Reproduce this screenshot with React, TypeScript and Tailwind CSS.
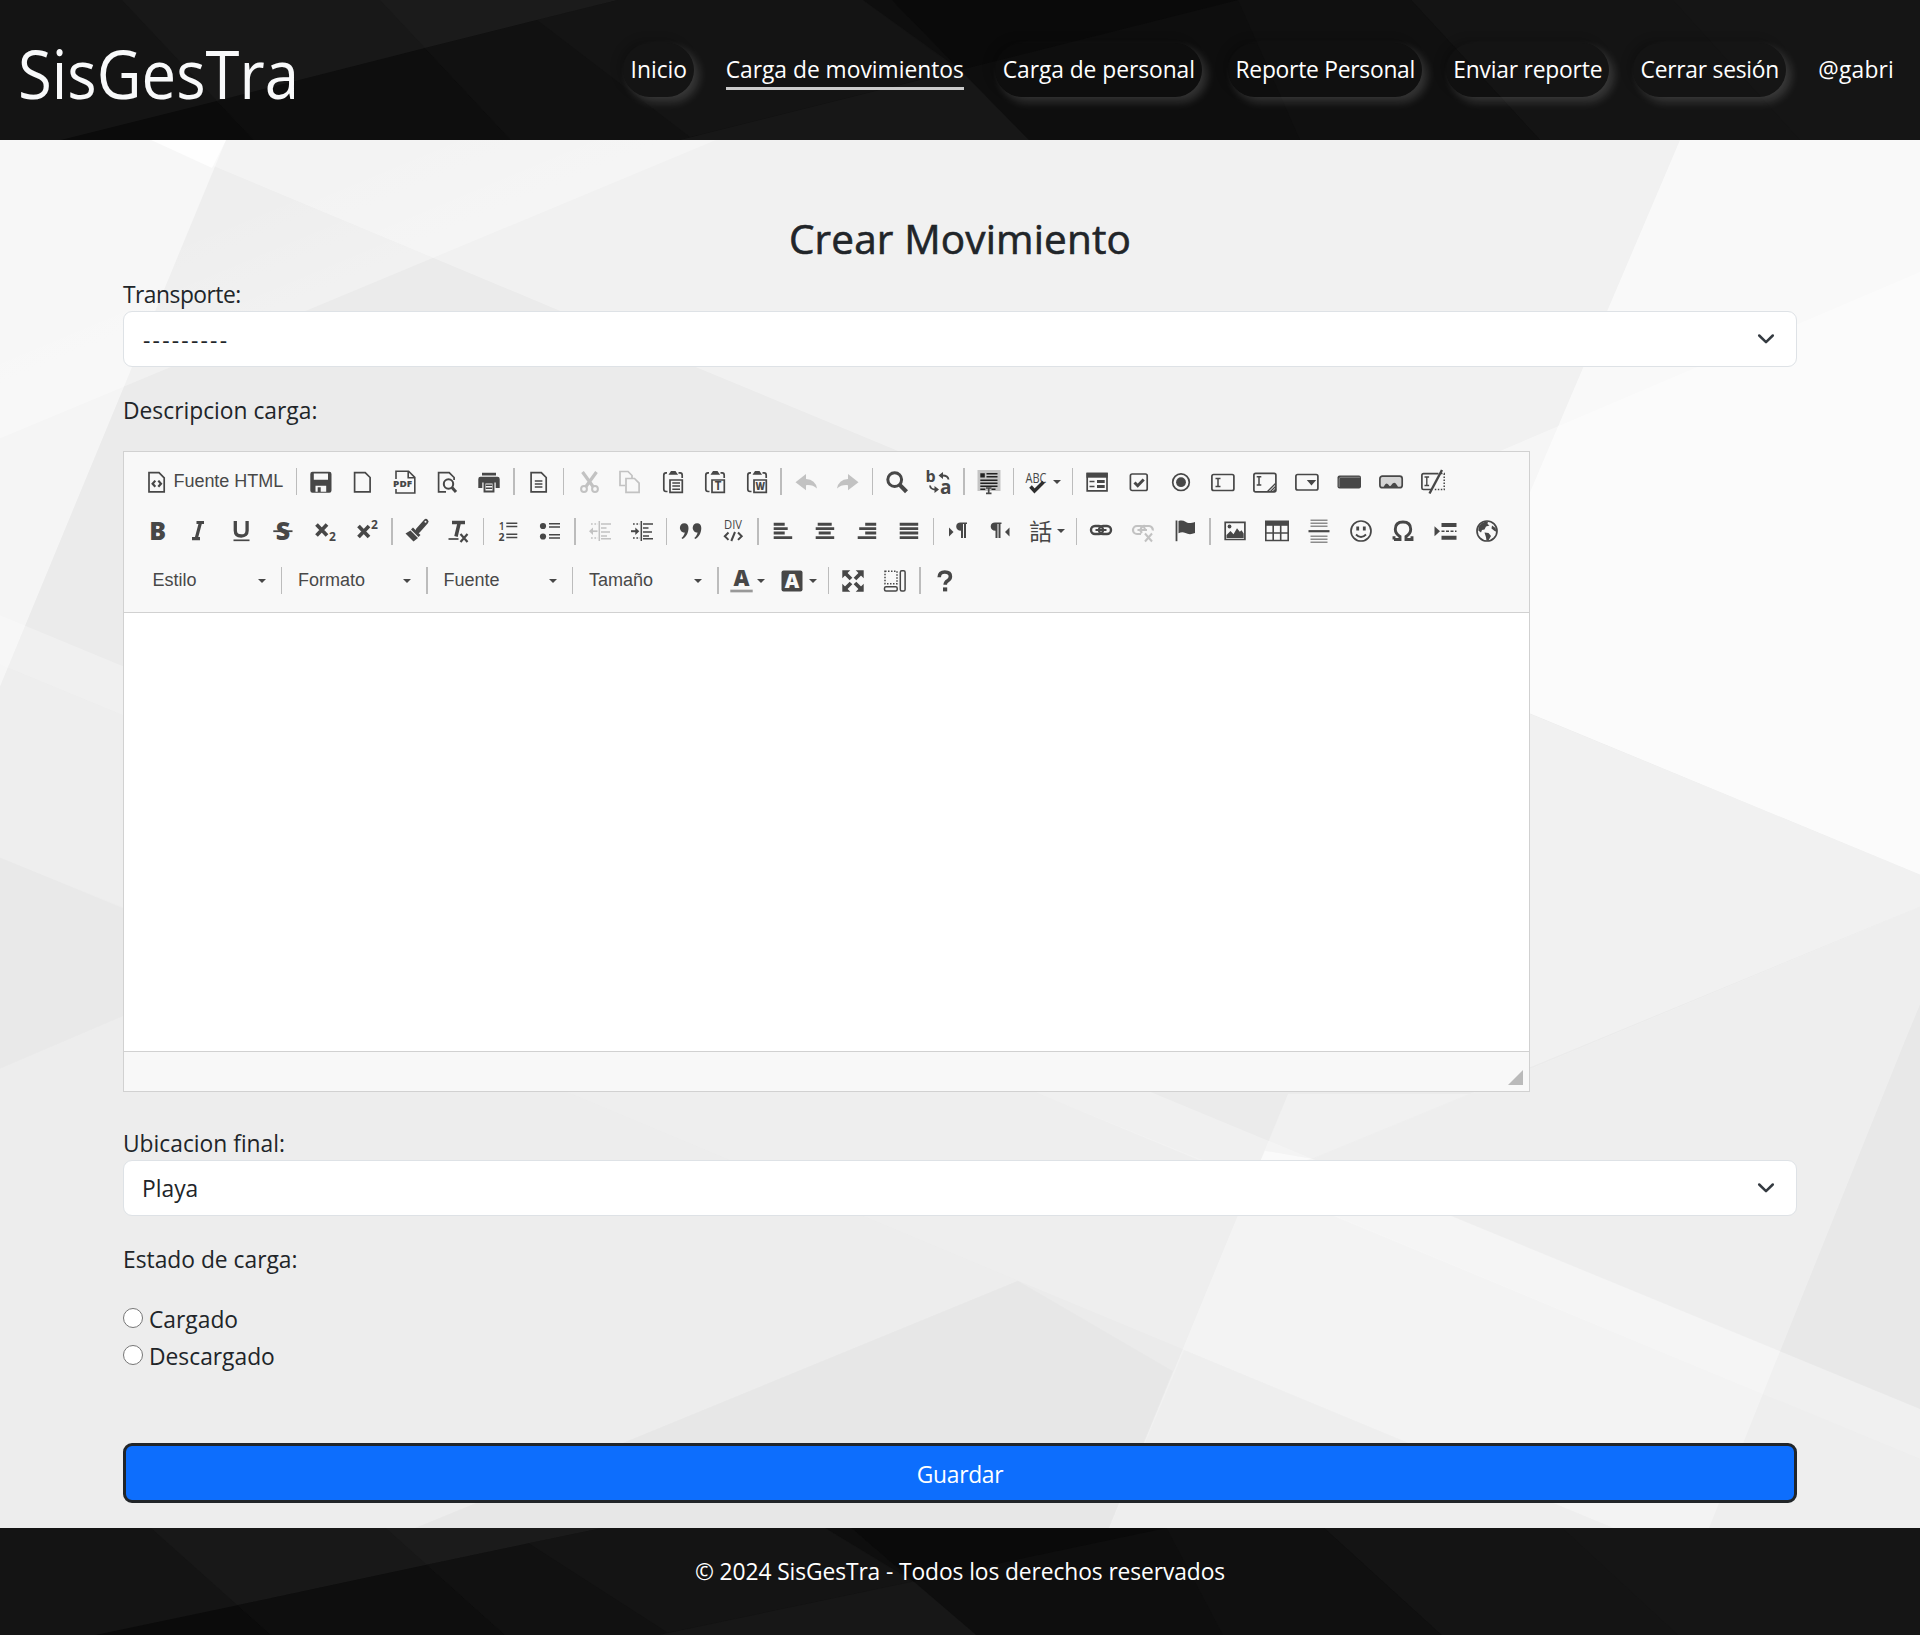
import React from 'react';

const INK = '#474747';

type IconProps = { children: React.ReactNode; dim?: boolean };

function Icon({ children, dim }: IconProps) {
  return (
    <svg
      viewBox="0 0 24 24"
      className={dim ? 'h-6 w-6 shrink-0 overflow-visible opacity-30' : 'h-6 w-6 shrink-0 overflow-visible'}
      fill="none"
      stroke={INK}
      strokeWidth="1.7"
    >
      {children}
    </svg>
  );
}

type GlyphProps = {
  x: number;
  y: number;
  size: number;
  children: string;
  family?: string;
  weight?: number;
  fill?: string;
  length?: number;
};

function Glyph({ x, y, size, children, family = 'Open Sans', weight = 700, fill = INK, length }: GlyphProps) {
  return (
    <text
      x={x}
      y={y}
      fontSize={size}
      fontFamily={`"${family}", sans-serif`}
      fontWeight={weight}
      textAnchor="middle"
      fill={fill}
      stroke="none"
      textLength={length}
      lengthAdjust="spacingAndGlyphs"
    >
      {children}
    </text>
  );
}

const solid = { fill: INK, stroke: 'none' };

const clipboard = (
  <>
    <path d="M7.500 21.500H6q-2.200 0-2.200-2.200V5.200q0-2.400 2.200-2.400h1M18.500 2.800h1.700q2 0 2 2.400V8" />
    <path {...solid} d="M8.500 4.700 10 2.600 11 1h4.500l1 1.600 1.600 2.100z" />
    <path d="M10 10h12.300v12.300H10z" />
  </>
);

const icons: Record<string, React.ReactNode> = {
  source: (
    <>
      <path d="M4 2.600h10l5.200 5.200v14.100H4z" />
      <path d="M10.300 10.600 7.600 13.700l2.700 3.100M13.300 10.600l2.700 3.100-2.700 3.100" strokeWidth="2.200" />
    </>
  ),
  save: (
    <path
      {...solid}
      fillRule="evenodd"
      d="M3.500 1.700h16.800a2.200 2.200 0 0 1 2.200 2.200v16.600a2.200 2.200 0 0 1-2.200 2.200H3.500a2.200 2.200 0 0 1-2.200-2.200V3.900a2.200 2.200 0 0 1 2.200-2.200zM4.800 3.500v6.200h14.200V3.500zM6.500 15.800v5.900h2.200v-4.500h3v4.500h5.500v-5.900z"
    />
  ),
  newpage: <path d="M3.600 2.600h10.600l4.900 4.900v14.400H3.600z" />,
  pdf: (
    <>
      <path d="M3 9V1.200h12.600l6.200 6.200V23H3v-4M15.200 1.200v6.600h6.600" strokeWidth="1.600" />
      <Glyph x={9.600} y={16.800} size={9} weight={800} length={19}>PDF</Glyph>
    </>
  ),
  preview: (
    <>
      <path d="M11 21.900H3.600V2.600h10.600l4.900 4.900v2.500" />
      <circle cx="13.500" cy="14" r="4.700" strokeWidth="2" />
      <path d="m17 17.500 4 4.500" strokeWidth="3" />
    </>
  ),
  print: (
    <>
      <path {...solid} d="M5 2.800h14v2.800H5zM3.500 6.800h17a2.200 2.200 0 0 1 2.200 2.200v9h-4v-5.500H5.300V18h-4V9a2.200 2.200 0 0 1 2.200-2.200z" />
      <path d="M7.500 12.500h9v9h-9z" strokeWidth="1.900" />
      <path d="M8.800 15.300h6.400M8.800 18.300h6.400" strokeWidth="1.600" />
    </>
  ),
  templates: (
    <>
      <path d="M4.100 2.600h10.200l4.900 4.900v14.400H4.100z" />
      <path d="M7.800 11h7.600M7.800 14h7.600M7.800 17h7.600" strokeWidth="1.500" />
    </>
  ),
  cut: (
    <>
      <path d="M6.500 2 17 16.500M20.500 2 10 16.500" strokeWidth="3.200" />
      <circle cx="8" cy="19" r="2.900" strokeWidth="2" />
      <circle cx="19" cy="19" r="2.900" strokeWidth="2" />
    </>
  ),
  copy: (
    <>
      <path d="M7 15.500H2V1.500h8l4 4v3" />
      <path d="M8 8.500h8.500l4.600 4.600v9.300H8z" />
    </>
  ),
  paste: (
    <>
      {clipboard}
      <path d="M12.300 13h7.700M12.300 16.100h7.700M12.300 19.200h7.700" strokeWidth="1.500" />
    </>
  ),
  pasteText: (
    <>
      {clipboard}
      <Glyph x={16.150} y={20.300} size={11.500} weight={700}>T</Glyph>
    </>
  ),
  pasteWord: (
    <>
      {clipboard}
      <Glyph x={16.150} y={20.300} size={11} weight={800} length={9.500}>W</Glyph>
    </>
  ),
  undo: <path {...solid} d="M1.500 12.200 12 4v5q9.500.700 11 9.500-4.500-4-11-3.300v5z" />,
  redo: <path {...solid} d="M22.500 12.200 12 4v5q-9.500.700-11 9.500 4.500-4 11-3.300v5z" />,
  find: (
    <>
      <circle cx="9.700" cy="9.600" r="6.900" strokeWidth="3" />
      <path d="m14.500 14.600 7 7.200" strokeWidth="4.200" />
    </>
  ),
  replace: (
    <>
      <Glyph x={3.600} y={12.300} size={16} weight={700}>b</Glyph>
      <Glyph x={18.800} y={24} size={19} weight={700}>a</Glyph>
      <path d="M21.500 9.500q-.500-4-6-4M3 15.500q.500 4 5.500 4" strokeWidth="1.900" />
      <path {...solid} d="m11.500 5.500 4.500-3.500v7zM12 19.500l-4.500-3.500v7z" />
    </>
  ),
  selectall: (
    <>
      <path d="M.5 0h23v21H.5z" fill="#c4c4c4" stroke="none" />
      <path fill="#222" stroke="none" d="M3.300 3.200h4.500v4.200H3.300zM9.500 3h11v1.600h-11zM9.500 6h11v1.600h-11zM3.300 9.500h17.200v1.600H3.300zM3.300 12.500h17.200v1.600H3.300zM3.300 15.500h17.200v1.600H3.300zM3.300 18.500h5V20h-5zM14.500 18.500h4V20h-4z" />
      <path d="M9 18h5.500M9 23.300h5.500M11.700 18v5.500" strokeWidth="1.700" />
    </>
  ),
  spell: (
    <>
      <Glyph x={11} y={13.300} size={14.500} weight={500} length={21}>ABC</Glyph>
      <path d="m5.500 16.500 4 4.500 9-9" strokeWidth="3.500" stroke="#2e2e2e" />
    </>
  ),
  form: (
    <>
      <path d="M2.200 3.500h19.800v17.300H2.200z" />
      <path {...solid} d="M1.500 2.700h21.200v5H1.500z" />
      <path d="M4.500 11.500h5M4.500 16.500h5" strokeWidth="1.600" />
      <path d="M12 11.500h7.700M12 16.500h7.700" strokeWidth="2.800" />
    </>
  ),
  checkbox: (
    <>
      <rect x="3.400" y="4" width="16.800" height="16.500" rx="1.800" />
      <path d="m7.500 12.500 3.200 3.200 6-6.200" strokeWidth="3" />
    </>
  ),
  radio: (
    <>
      <circle cx="12" cy="12.200" r="8.300" />
      <circle cx="12" cy="12.200" r="4.900" {...solid} />
    </>
  ),
  textfield: (
    <>
      <rect x=".9" y="4.500" width="22" height="16" rx="1.800" />
      <path d="M4.500 8.500h5M4.500 16.500h5M7 8.500v8" strokeWidth="1.500" />
    </>
  ),
  textarea: (
    <>
      <rect x=".9" y="3.300" width="22" height="18.500" rx="1.800" />
      <path d="M3.700 6.800h4.600M3.700 15h4.600M6 6.800V15" strokeWidth="1.500" />
      <path d="m14.500 21.500 8-8M17.500 21.500l5-5M20.300 21.500l2.500-2.500" strokeWidth="1.300" />
    </>
  ),
  select: (
    <>
      <rect x=".9" y="4.500" width="22" height="15.500" rx="1.800" />
      <path {...solid} d="M11.800 10h9.400l-4.700 5.600z" />
    </>
  ),
  button: (
    <>
      <rect x=".5" y="5.500" width="23.500" height="13" rx="2" {...solid} />
      <path d="M2.200 17V9q0-1.700 1.700-1.700h19" stroke="#858585" strokeWidth="1" />
    </>
  ),
  imagebutton: (
    <>
      <rect x=".9" y="6.200" width="22.300" height="11.500" rx="2.500" fill="#d4d4d4" />
      <path {...solid} d="M4 18c1-1.500 2-4.500 3.700-4.500 1.300 0 2.500 2.700 3.300 2.700s2.500-3.500 4.300-3.500 3.200 3.500 4.500 5.300z" />
    </>
  ),
  hidden: (
    <>
      <path d="M10 19.500H2.500q-1.600 0-1.600-1.600V5.200q0-1.600 1.600-1.600h15" />
      <path d="M3.500 7h4.600M3.500 15.500h4.600M5.800 7v8.500" strokeWidth="1.400" />
      <path d="M21 0 8.500 23.500" strokeWidth="2.400" />
      <path d="M20 3.600h3.200v15.900H13" strokeDasharray="1.500 1.500" strokeWidth="1.500" />
    </>
  ),
  bold: <Glyph x={12.600} y={20.500} size={25} weight={800}>B</Glyph>,
  italic: <path d="M9.500 3.500h7.500M5 19.700h8M13.500 3.500 9.200 19.700" strokeWidth="3.200" />,
  underline: (
    <>
      <path d="M6.300 2v9.500q0 5.500 5.900 5.500t5.900-5.500V2" strokeWidth="3.300" />
      <path d="M4.500 21.300h16" strokeWidth="1.700" />
    </>
  ),
  strike: (
    <>
      <Glyph x={12} y={20.500} size={25} weight={800}>S</Glyph>
      <path d="M2.300 12.200h19.200" strokeWidth="1.800" />
    </>
  ),
  sub: (
    <>
      <path d="m3.500 5.500 10.500 11M14 5.500 3.500 16.500" strokeWidth="3.700" />
      <Glyph x={19.500} y={22.300} size={12} weight={700}>2</Glyph>
    </>
  ),
  sup: (
    <>
      <path d="m3.500 7 10.500 11M14 7 3.500 18" strokeWidth="3.700" />
      <Glyph x={19.500} y={10.300} size={12} weight={700}>2</Glyph>
    </>
  ),
  brush: (
    <>
      <path {...solid} d="M8 8.500 15.500 16l-2 2L6 10.500zM5.500 11.500 13 19l-4.500 3.500L.5 14.500z" />
      <path d="m13 11.500 8-9" strokeWidth="5" strokeLinecap="round" />
      <circle cx="20.500" cy="2.700" r="1" fill="#f8f8f8" stroke="none" />
    </>
  ),
  removeFormat: (
    <>
      <path d="M5 3.500h13M12.300 3.500 9 17.500" strokeWidth="3.500" />
      <path d="M1.500 20h10" strokeWidth="1.700" />
      <path d="m13.500 15 7 8M20.500 15l-7 8" strokeWidth="2.200" />
    </>
  ),
  numbered: (
    <>
      <Glyph x={5.800} y={10.500} size={10.500} weight={600}>1</Glyph>
      <Glyph x={5.500} y={22} size={10.500} weight={700}>2</Glyph>
      <path d="M10.300 4.200h11M10.300 7.500h11M10.300 15.200h11M10.300 18.500h11" strokeWidth="1.600" />
    </>
  ),
  bulleted: (
    <>
      <circle cx="5" cy="7" r="3.100" {...solid} />
      <circle cx="5" cy="17.500" r="3.100" {...solid} />
      <path d="M11 4.700h11M11 8h11M11 15.700h11M11 19h11" strokeWidth="1.600" />
    </>
  ),
  outdent: (
    <>
      <path d="M11.300 2v20M13 5h10M13 9h5.500M13 13h9M13 17h6M13 19.800h10" strokeWidth="1.500" />
      <path d="M3 5h7M3 19h7" strokeDasharray="1.700 1.700" strokeWidth="1.500" />
      <path d="M3 12.200h6.500" strokeWidth="1.700" />
      <path {...solid} d="m1 12.200 4-3.700v7.400z" />
    </>
  ),
  indent: (
    <>
      <path d="M11.300 2v20M13 5h10M13 9h5.500M13 13h9M13 17h6M13 19.800h10" strokeWidth="1.500" />
      <path d="M3 5h7M3 19h7" strokeDasharray="1.700 1.700" strokeWidth="1.500" />
      <path d="M1 12.200h5" strokeWidth="2" />
      <path {...solid} d="m9.300 12.200-4-3.700v7.400z" />
    </>
  ),
  quote: (
    <path
      {...solid}
      d="M5.300 4.200c2.600 0 4.200 1.900 4.200 4.900 0 5-2.500 9-6 11l-1-1.200c2-1.500 3-3.500 3.200-5.400C3.200 14 .9 11.500.9 8.800c0-2.700 1.800-4.600 4.400-4.600zM18.100 4.200c2.600 0 4.200 1.900 4.200 4.900 0 5-2.500 9-6 11l-1-1.200c2-1.500 3-3.500 3.200-5.400-2.500.5-4.800-2-4.800-4.700 0-2.700 1.800-4.600 4.400-4.600z"
    />
  ),
  div: (
    <>
      <Glyph x={12} y={10.300} size={13.500} weight={500} length={18}>DIV</Glyph>
      <path d="M7.500 13.500 3.800 17.200l3.700 3.700M17 13.500l3.700 3.700-3.700 3.700M14 13l-3.700 9" strokeWidth="2" />
    </>
  ),
  alignLeft: <path d="M2.700 5.200h11M2.700 9.600h14M2.700 14h11M2.700 18.600h18.500" strokeWidth="2.900" />,
  alignCenter: <path d="M4.700 5.200h14M2.700 9.600h18.500M5.700 14h12M2.700 18.600h18.500" strokeWidth="2.900" />,
  alignRight: <path d="M10.200 5.200h11M4.200 9.600h17M10.200 14h11M2.700 18.600h18.500" strokeWidth="2.900" />,
  justify: <path d="M2.700 5.200h18.500M2.700 9.600h18.500M2.700 14h18.500M2.700 18.600h18.500" strokeWidth="2.900" />,
  ltr: (
    <>
      <path {...solid} d="m3 8.500 4.500 4.500L3 17.500z" />
      <path {...solid} d="M14.500 3.500H21V5h-1v14h-2V5h-1v14h-2v-7.300c-3 0-4.800-1.800-4.800-4.200s1.800-4 4.300-4z" />
    </>
  ),
  rtl: (
    <>
      <path {...solid} d="m21.500 8.500-4.500 4.500 4.500 4.500z" />
      <path {...solid} d="M7 3.500h6.500V5h-1v14h-2V5h-1v14h-2v-7.300c-3 0-4.800-1.800-4.800-4.200s1.800-4 4.300-4z" />
    </>
  ),
  language: <Glyph x={11.800} y={20.600} size={23} weight={400} family="Noto Sans CJK SC">話</Glyph>,
  link: (
    <>
      <rect x="2" y="7" width="12" height="8" rx="4" strokeWidth="2.400" />
      <rect x="10" y="7" width="12" height="8" rx="4" strokeWidth="2.400" />
      <path d="M6.500 11h11" strokeWidth="2" />
    </>
  ),
  unlink: (
    <>
      <path d="M10 15H6a4 4 0 0 1 0-8h4a4 4 0 0 1 4 4M11 14a4 4 0 0 1 3-7h4a4 4 0 0 1 3.800 4.500" strokeWidth="2.200" />
      <path d="M6.500 11H16M14 14.500l7 8M21 14.500l-7 8" strokeWidth="2" />
    </>
  ),
  flag: (
    <>
      <path d="M3.500 1.500v20.700" strokeWidth="1.800" />
      <path {...solid} d="M5.500 2c3-.8 5-.5 7 .8s4.500 2 9.500.2v11c-4 1.700-7 1.300-9.500 0s-4.500-1-7 .2z" />
    </>
  ),
  image: (
    <>
      <path d="M2.200 3.300h19.700v17.200H2.200z" />
      <path {...solid} d="M3.500 19v-3l4-4 3 3.200 3.500-6 2.800 3.500 1.700-1.500 2.200 3.300V19z" />
      <circle cx="6.500" cy="7.500" r="1.900" {...solid} />
    </>
  ),
  table: (
    <>
      <path {...solid} d="M0 1.500h24v5.300H0z" />
      <path d="M.8 6v15.500h22.400V6M8.200 6v16M15.700 6v16M.8 14h22.400" strokeWidth="1.600" />
    </>
  ),
  rule: (
    <>
      <path d="M3.500 1.200h17M3.500 4.200h17M3.500 7.200h17M3.500 17.300h17M3.500 20.300h17M3.500 23.300h17" stroke="#8c8c8c" strokeWidth="1.400" />
      <path d="M1.500 12.200h21" strokeWidth="2.200" />
    </>
  ),
  smiley: (
    <>
      <circle cx="12" cy="12" r="10" />
      <path d="M7 15.500q5 5 10 0" strokeWidth="1.800" />
      <path d="M8.700 7.500v4M15.300 7.500v4" strokeWidth="2.800" />
    </>
  ),
  omega: (
    <path d="M3 20.500h6v-3Q4.300 14.800 4.300 10.300 4.300 3 12 3t7.700 7.300q0 4.500-4.700 7.200v3h6v-3.300M3 17.200v3.300" strokeWidth="2.900" />
  ),
  pagebreak: (
    <>
      <path {...solid} d="m1.500 7.300 5.500 5-5.500 5z" />
      <path d="M8.500 6h15M8.500 18.700h15" strokeWidth="4" />
      <path d="M8.500 12.300h15" strokeDasharray="3 1.500" strokeWidth="1.600" />
    </>
  ),
  globe: (
    <>
      <circle cx="12" cy="12" r="10" />
      <path {...solid} d="M4 7.500C6 4 9 2.500 13 2.500l-.5 2.500 2 1.500-3.500 1-1.500 3L7 11l-1 2.500-2.700-2zM9.500 13.500l4 .5 2.500 3-2.500 4.500-2 .3-.5-3.500z" />
      <path {...solid} d="M17 6.500 20.500 9l1 4-2.500-1.500-2.500-2z" />
    </>
  ),
  textColor: (
    <>
      <Glyph x={12.500} y={17} size={22} weight={800}>A</Glyph>
      <path d="M1.300 22h22.400" stroke="#999" strokeWidth="2.700" />
    </>
  ),
  bgColor: (
    <>
      <rect x=".5" y="1.500" width="21" height="21" rx="2" {...solid} />
      <Glyph x={11} y={19} size={20} weight={800} fill="#f8f8f8">A</Glyph>
    </>
  ),
  maximize: (
    <>
      <path d="m4 4 6 6M20 4l-6 6M4 20l6-6M20 20l-6-6" strokeWidth="3.800" />
      <path {...solid} d="M1.300 1.300h8l-8 8zM22.700 1.300h-8l8 8zM1.300 22.700h8l-8-8zM22.700 22.700h-8l8-8z" />
    </>
  ),
  blocks: (
    <>
      <path d="M2 2.300h12v12.500H2z" strokeDasharray="1.500 1.500" strokeWidth="1.500" />
      <rect x="17.300" y="1.800" width="4.800" height="20.200" rx="1.500" strokeWidth="1.500" />
      <rect x="1.500" y="17.700" width="12.700" height="4.300" rx="1.500" strokeWidth="1.500" />
    </>
  ),
  help: (
    <>
      <path d="M6.200 8.200q0-5.200 5.600-5.200t5.600 4.600q0 2.600-2.700 4.200-2.500 1.500-2.500 4" strokeWidth="3.600" />
      <path d="M10 18.400h4.200v4H10z" {...solid} />
    </>
  ),
};

function Caret() {
  return (
    <svg viewBox="0 0 8 4" className="h-1 w-2 shrink-0" fill={INK}>
      <path d="M0 0h8L4 4z" />
    </svg>
  );
}

function Tool({ name, dim }: { name: string; dim?: boolean }) {
  return (
    <button className="flex h-9 w-[42px] shrink-0 items-center justify-center">
      <Icon dim={dim}>{icons[name]}</Icon>
    </button>
  );
}

function MenuTool({ name }: { name: string }) {
  return (
    <button className="flex h-9 w-[51.5px] shrink-0 items-center gap-1 pl-[7.5px]">
      <Icon>{icons[name]}</Icon>
      <Caret />
    </button>
  );
}

function Sep() {
  return (
    <span className="flex w-[7.5px] shrink-0 justify-center">
      <span className="h-[27px] w-[1.5px] bg-[#bcbcbc]" />
    </span>
  );
}

function Combo({ label }: { label: string }) {
  return (
    <button className="flex h-9 w-[138px] shrink-0 items-center justify-between pr-3 pl-[13px] text-[18px] text-[#484848]">
      <span className="-mt-px">{label}</span>
      <Caret />
    </button>
  );
}

function Tools({ names, dim }: { names: string[]; dim?: boolean }) {
  return (
    <>
      {names.map((n) => (
        <Tool key={n} name={n} dim={dim} />
      ))}
    </>
  );
}

function Editor() {
  return (
    <div className="w-[1407px] border border-[#d1d1d1] bg-white font-['Liberation_Sans',Arial,sans-serif]">
      <div className="h-[161px] border-b border-[#d1d1d1] bg-[#f8f8f8] pt-[5px] pl-3">
        <div className="flex h-[49.5px] items-center">
          <button className="flex h-9 w-[156.5px] items-center gap-[5px] pl-[8.5px] text-[18px] whitespace-nowrap text-[#484848]">
            <Icon>{icons.source}</Icon>
            <span className="-mt-px tracking-[-0.04px]">Fuente HTML</span>
          </button>
          <Sep />
          <Tools names={['save', 'newpage', 'pdf', 'preview', 'print']} />
          <Sep />
          <Tool name="templates" />
          <Sep />
          <Tools names={['cut', 'copy']} dim />
          <Tools names={['paste', 'pasteText', 'pasteWord']} />
          <Sep />
          <Tools names={['undo', 'redo']} dim />
          <Sep />
          <Tools names={['find', 'replace']} />
          <Sep />
          <Tool name="selectall" />
          <Sep />
          <MenuTool name="spell" />
          <Sep />
          <Tools names={['form', 'checkbox', 'radio', 'textfield', 'textarea', 'select', 'button', 'imagebutton', 'hidden']} />
        </div>
        <div className="flex h-[49.5px] items-center">
          <Tools names={['bold', 'italic', 'underline', 'strike', 'sub', 'sup']} />
          <Sep />
          <Tools names={['brush', 'removeFormat']} />
          <Sep />
          <Tools names={['numbered', 'bulleted']} />
          <Sep />
          <Tool name="outdent" dim />
          <Tool name="indent" />
          <Sep />
          <Tools names={['quote', 'div']} />
          <Sep />
          <Tools names={['alignLeft', 'alignCenter', 'alignRight', 'justify']} />
          <Sep />
          <Tools names={['ltr', 'rtl']} />
          <MenuTool name="language" />
          <Sep />
          <Tool name="link" />
          <Tool name="unlink" dim />
          <Tool name="flag" />
          <Sep />
          <Tools names={['image', 'table', 'rule', 'smiley', 'omega', 'pagebreak', 'globe']} />
        </div>
        <div className="flex h-[49.5px] items-center pl-[3.5px]">
          {['Estilo', 'Formato', 'Fuente', 'Tamaño'].map((label) => (
            <React.Fragment key={label}>
              <Combo label={label} />
              <Sep />
            </React.Fragment>
          ))}
          <MenuTool name="textColor" />
          <MenuTool name="bgColor" />
          <Sep />
          <Tools names={['maximize', 'blocks']} />
          <Sep />
          <Tool name="help" />
        </div>
      </div>
      <div className="h-[438px]" />
      <div className="flex h-10 items-end justify-end border-t border-[#d1d1d1] bg-[#f8f8f8] pr-[6px] pb-[6px]">
        <svg viewBox="0 0 15 15" className="h-[15px] w-[15px]" fill="#bababa">
          <path d="M15 0v15H0z" />
        </svg>
      </div>
    </div>
  );
}

function SelectBox({ children, spaced }: { children: string; spaced?: boolean }) {
  return (
    <div className="flex h-14 items-center justify-between rounded-[9px] border border-[#dee2e6] bg-white pr-[18px] pl-[18px]">
      <span className={spaced ? 'pt-[3px] pl-px tracking-[2.25px]' : 'pt-[2px]'}>{children}</span>
      <svg viewBox="0 0 24 24" className="h-6 w-6" fill="none" stroke="#343a40" strokeWidth="2.500" strokeLinecap="round" strokeLinejoin="round">
        <path d="m5.200 8.500 6.800 6.700 6.800-6.700" />
      </svg>
    </div>
  );
}

function FieldLabel({ children, tight }: { children: string; tight?: boolean }) {
  return <div className={tight ? 'pt-1 leading-8 tracking-[-0.5px]' : 'pt-1 leading-8'}>{children}</div>;
}

function LightBackdrop() {
  return (
    <svg viewBox="0 140 1920 1387" preserveAspectRatio="none" className="absolute inset-0 h-full w-full">
      <defs>
        <linearGradient id="bandA" gradientUnits="userSpaceOnUse" x1="250" y1="200" x2="310" y2="344">
          <stop offset="0" stopColor="#fff" stopOpacity="0" />
          <stop offset="1" stopColor="#fff" stopOpacity=".25" />
        </linearGradient>
      </defs>
      <path d="M0 140h1920v1387H0z" fill="#ebebeb" />
      <g fill="#fff">
        <path d="M151 140H1920V874L568 314z" opacity=".33" />
        <path d="M0 140H716L0 438z" opacity=".15" />
        <path d="M400 140H716L0 438V310z" fill="url(#bandA)" />
        <path d="M0 140H226L0 686z" opacity=".5" />
        <path d="M151 140h75l-14 28z" opacity=".8" />
        <path d="M1680 140H1920V874L1450 680z" opacity=".6" />
        <path d="M1920 272V874L1450 680V472z" opacity=".4" />
        <path d="M1529 713 1920 874V906L1529 1067z" opacity=".33" />
        <path d="M0 615 1155 1093 1312 1158 1920 1408V1458L1333 1215 1039 1093 0 664z" opacity=".25" />
        <path d="M0 664 1039 1093 1202 1159 1920 1458V1527H1614L1018 1280 571 1093 0 857z" opacity=".16" />
        <path d="M0 1068 300 940 571 1093 1018 1280 415 1527H0z" opacity=".12" />
        <path d="M1288 1093 1109 1527H1709L1905 1040 1920 1004V906L1470 1093 1312 1158 1265 1150z" opacity=".32" />
        <path d="M1288 1093H1470L1312 1158 1265 1150z" opacity=".3" />
        <path d="M1265 1150 1312 1158 1255 1172z" opacity=".5" />
      </g>
      <g fill="#000">
        <path d="M0 857 122 906 300 940 0 1068z" opacity=".008" />
        <path d="M1018 1280 415 1527H1109L1173 1370z" opacity=".016" />
        <path d="M1109 1527 1184 1349 1614 1527z" opacity=".01" />
        <path d="M1920 906 1470 1093 1312 1158 1920 1408z" opacity=".01" />
      </g>
    </svg>
  );
}

function DarkBackdrop({ viewBox }: { viewBox: string }) {
  return (
    <svg viewBox={viewBox} preserveAspectRatio="none" className="absolute inset-0 h-full w-full">
      <path d="M-50 0h2150v140H-50z" fill="#141414" />
      <path d="M122 0H618L217 101z" fill="#181818" />
      <path d="M380 0H618L425 48z" fill="#1b1b1b" />
      <path d="M61 140 217 101 254 140z" fill="#0b0b0b" />
      <path d="M217 101 425 48 511 140H254z" fill="#0e0e0e" />
      <path d="M425 48 537 20 706 140H511z" fill="#111111" />
      <path d="M537 20 618 0H863L958 70 690 137z" fill="#141414" />
      <path d="M680 140 960 70 1029 140z" fill="#171717" />
      <path d="M863 0h29l68 70z" fill="#0e0e0e" />
      <path d="M892 0H1411L1540 140H1029z" fill="#0e0e0e" />
      <path d="M892 0H1238L960 70z" fill="#0a0a0a" />
      <path d="M1238 0H1411L1540 140H1300z" fill="#101010" />
      <path d="M1673 0H2100V140H1800z" fill="#151515" />
    </svg>
  );
}

const links = [
  { label: 'Inicio', width: 'w-[71px]' },
  { label: 'Carga de movimientos', width: 'w-[253px]', active: true },
  { label: 'Carga de personal', width: 'w-[207px] mr-[2px] tracking-[-0.05px]' },
  { label: 'Reporte Personal', width: 'w-[194px] tracking-[-0.25px]' },
  { label: 'Enviar reporte', width: 'w-[163px] tracking-[-0.2px]' },
  { label: 'Cerrar sesión', width: 'w-[153px] tracking-[-0.25px]' },
];

export default function App() {
  return (
    <div className="flex h-[1636px] w-[1920px] flex-col overflow-hidden bg-white font-['Open_Sans','Noto_Sans',sans-serif] text-[22.8px] leading-9 text-[#212529]">
      <header className="relative h-[140px] shrink-0">
        <DarkBackdrop viewBox="0 0 1920 140" />
        <div className="relative flex h-full items-start justify-between pr-[26px] pl-[18px] text-white">
          <h1 className="mt-[23px] origin-left scale-x-[.92] text-[67px] leading-[100px] text-[#f8f9fa]">SisGesTra</h1>
          <nav className="mt-[43px] flex items-start gap-[24px] whitespace-nowrap">
            {links.map((l) => (
              <a
                key={l.label}
                className={`flex h-[54px] justify-center pt-[9px] ${l.width} ${
                  l.active ? '' : 'rounded-[27px] shadow-[5px_5px_10px_rgba(255,255,255,0.16),-4px_-3px_10px_rgba(0,0,0,0.2)]'
                }`}
              >
                <span className={l.active ? 'h-[38px] border-b-[3px] border-[#ccc] leading-9' : 'leading-9'}>{l.label}</span>
              </a>
            ))}
            <span className="ml-[8px] pt-[9px] leading-9 tracking-[0.2px]">@gabri</span>
          </nav>
        </div>
      </header>

      <main className="relative h-[1388px] shrink-0">
        <LightBackdrop />
        <div className="relative mx-auto w-[1674px] pt-[70px]">
          <h2 className="text-center text-[40.5px] leading-[58px] font-medium tracking-[0.15px] [-webkit-text-stroke:0.6px_#212529]">
            Crear Movimiento
          </h2>
          <div className="mt-[7px]">
            <FieldLabel tight>Transporte:</FieldLabel>
          </div>
          <SelectBox spaced>---------</SelectBox>
          <div className="mt-6">
            <FieldLabel>Descripcion carga:</FieldLabel>
          </div>
          <div className="mt-6">
            <Editor />
          </div>
          <div className="mt-8">
            <FieldLabel>Ubicacion final:</FieldLabel>
          </div>
          <SelectBox>Playa</SelectBox>
          <div className="mt-6">
            <FieldLabel>Estado de carga:</FieldLabel>
          </div>
          <div className="mt-[25px]">
            {['Cargado', 'Descargado'].map((t) => (
              <label key={t} className="flex items-center gap-[6.5px]">
                <span className="mb-[3px] h-[19.5px] w-[19.5px] rounded-full border-[1.5px] border-[#767676] bg-white" />
                <span className="pt-px">{t}</span>
              </label>
            ))}
          </div>
          <button className="mt-[68px] h-[60px] w-full rounded-[9px] border-[3px] border-[#212529] bg-[#0d6efd] pt-[3px] tracking-[-0.3px] text-white">
            Guardar
          </button>
        </div>
      </main>

      <footer className="relative h-[107px] shrink-0">
        <DarkBackdrop viewBox="-44 0 2110 140" />
        <p className="relative pt-[26px] text-center tracking-[-0.1px] text-white">© 2024 SisGesTra - Todos los derechos reservados</p>
      </footer>
    </div>
  );
}
